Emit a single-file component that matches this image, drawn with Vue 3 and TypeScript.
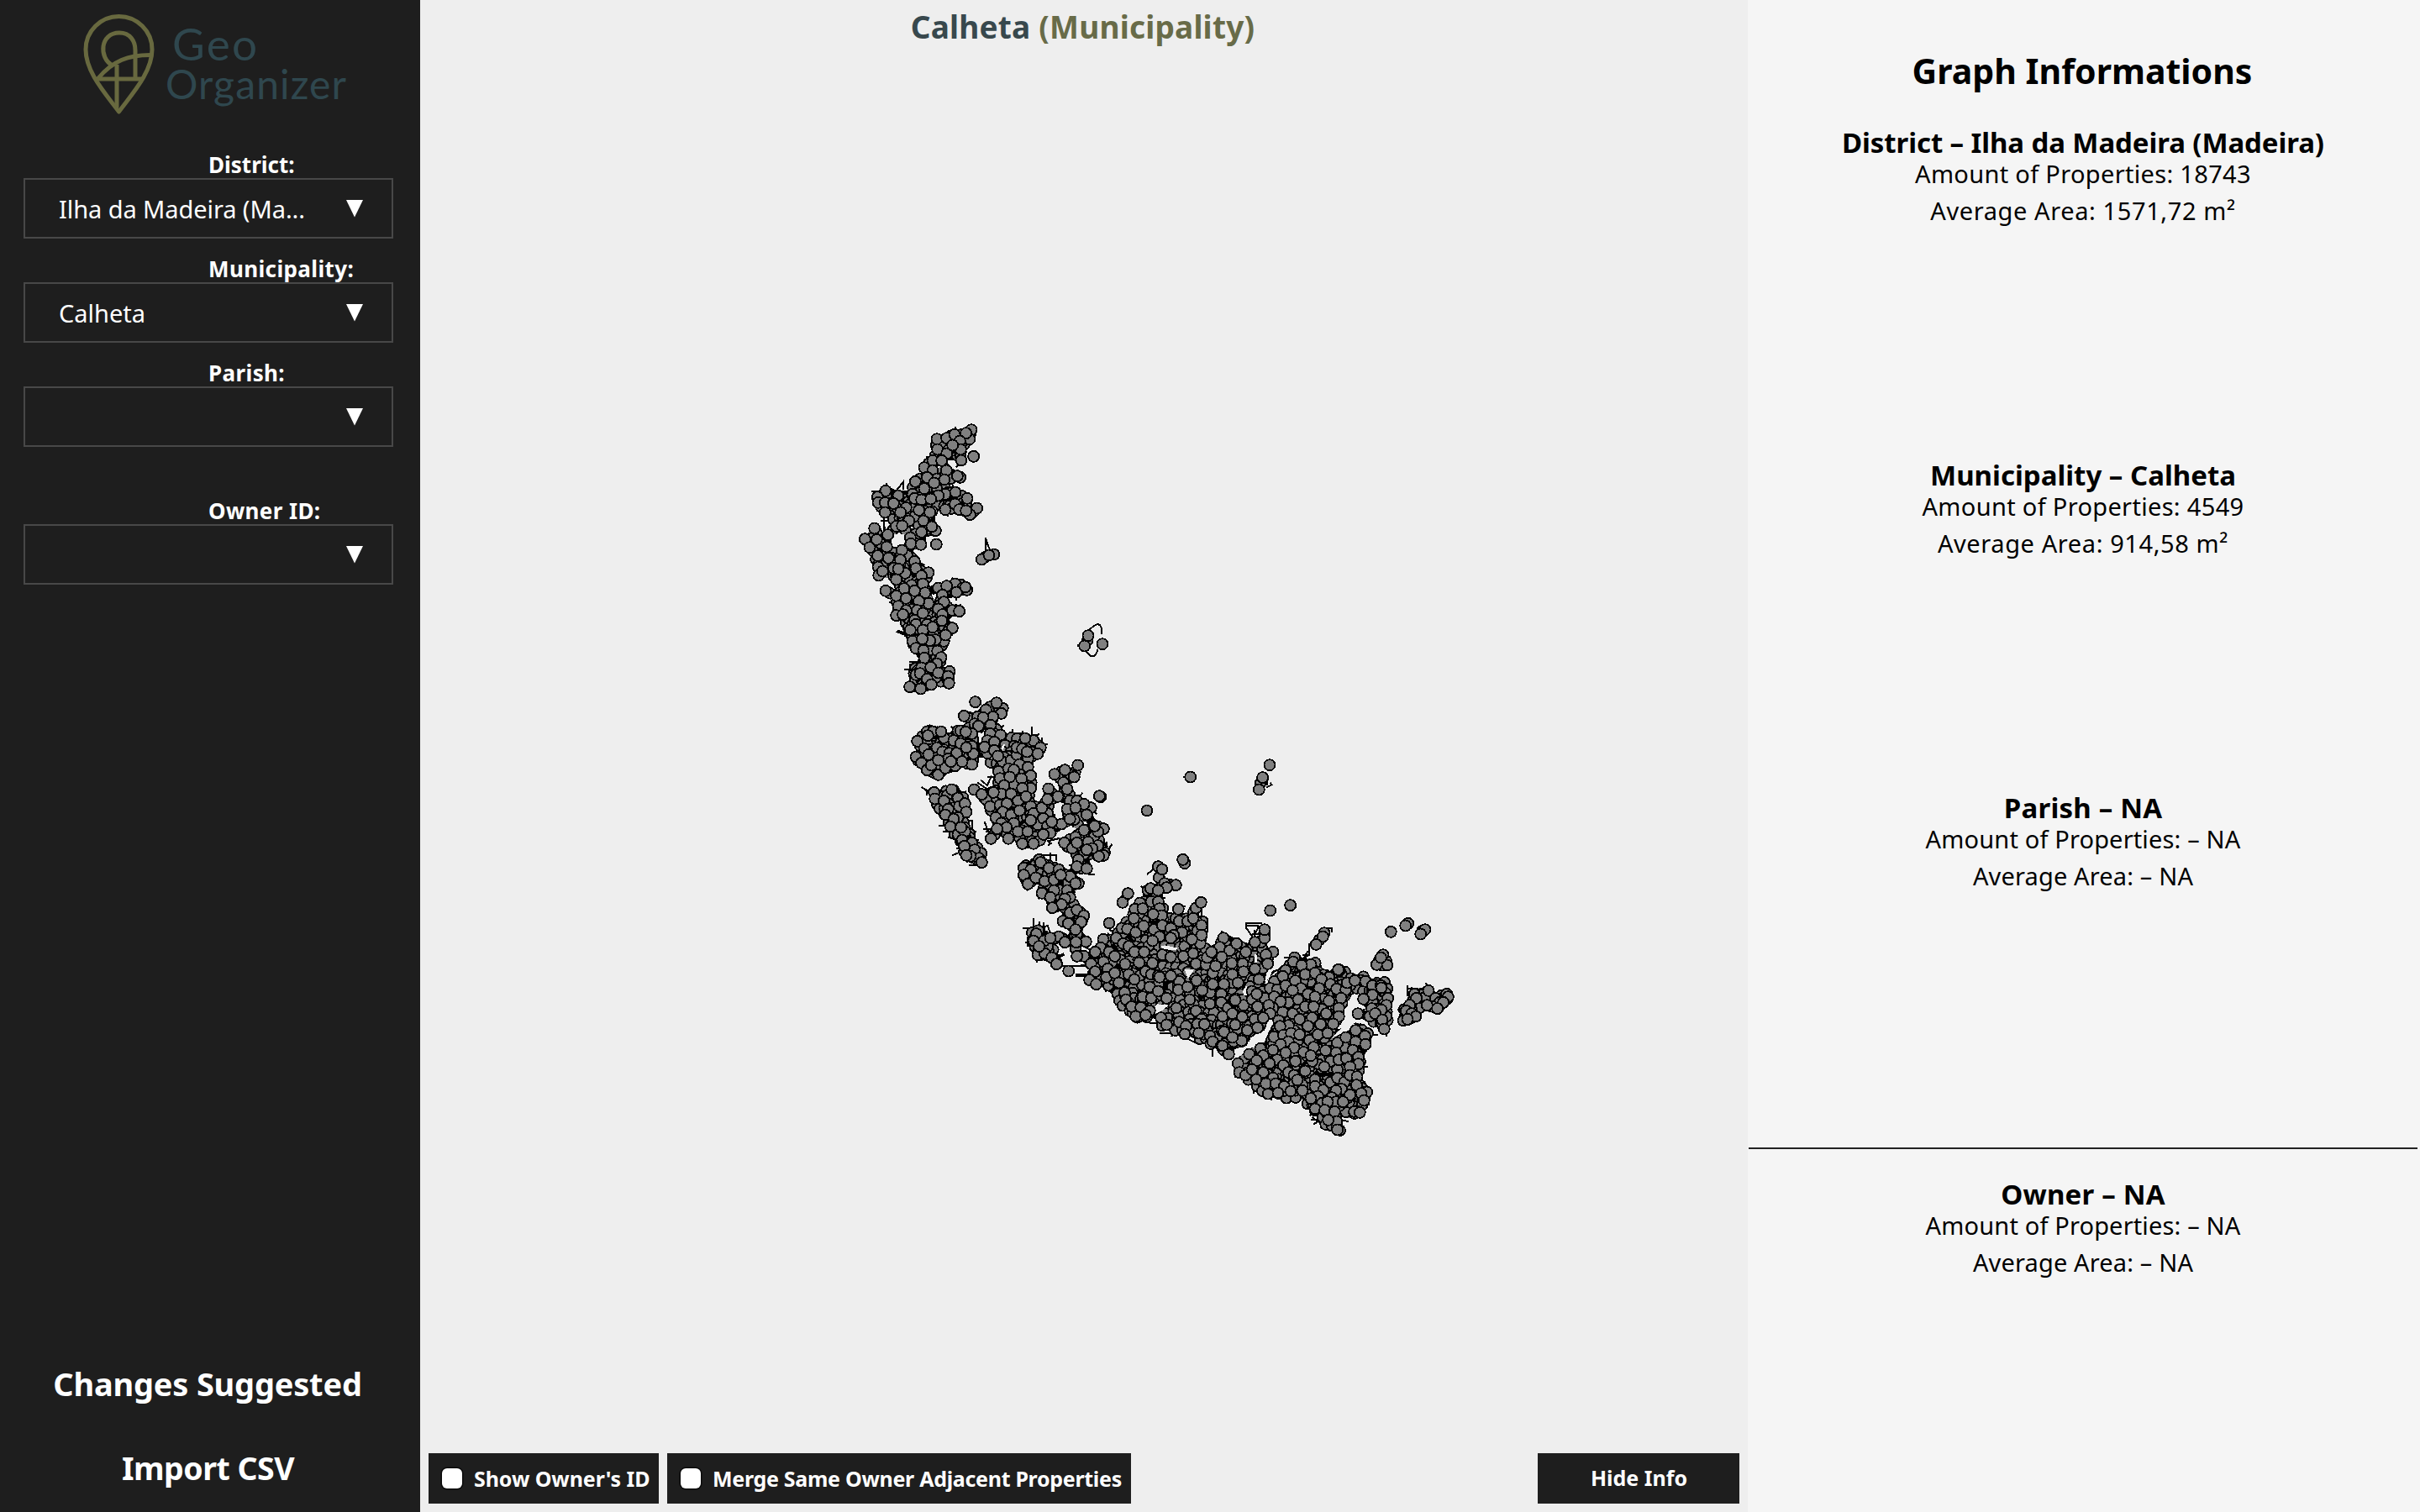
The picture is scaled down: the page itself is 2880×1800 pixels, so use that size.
<script setup lang="ts">
interface Field { label: string; value: string; key: string; apart?: boolean }
interface Block { title: string; amount: string; area: string; squared: boolean; owner?: boolean }
interface Cluster { x: number; y: number; nodes: string; spikes: string; mass: string; holes: string }
interface Pt { x: number; y: number }

const fields: Field[] = [
  { label: 'District:', value: 'Ilha da Madeira (Ma...', key: 'district' },
  { label: 'Municipality:', value: 'Calheta', key: 'municipality' },
  { label: 'Parish:', value: '', key: 'parish' },
  { label: 'Owner ID:', value: '', key: 'owner-id', apart: true },
]

const blocks: Block[] = [
  { title: 'District – Ilha da Madeira (Madeira)', amount: '18743', area: '1571,72 m', squared: true },
  { title: 'Municipality – Calheta', amount: '4549', area: '914,58 m', squared: true },
  { title: 'Parish – NA', amount: '– NA', area: '– NA', squared: false },
  { title: 'Owner – NA', amount: '– NA', area: '– NA', squared: false, owner: true },
]

// Node positions are in thirds of a pixel, relative to the cluster's origin.
const clusters: Cluster[] = [
  {
    x: 1000, y: 480,
    nodes: `345,128 380,125 408,112 468,95 462,128 449,107 427,135 347,165 430,165 380,180 401,150 476,190 330,205 362,205 432,204
    300,230 330,240 379,240 268,280 345,270 310,265 372,273 428,265 418,260 335,285 300,305 400,318 375,325 411,318 350,330 453,340
    258,325 162,313 133,335 207,330 135,355 160,355 190,358 265,340 290,345 323,342 235,373 281,382 488,375 410,360 375,380 463,398
    425,380 449,384 160,390 215,390 320,390 245,420 297,420 340,455 327,441 200,440 221,438 290,460 122,447 88,485 105,515 170,470
    130,487 166,513 250,480 252,502 288,505 343,504 240,545 220,525 134,545 172,553 215,560 265,565 135,585 137,615 151,600 190,590
    232,607 207,592 270,590 315,605 290,617 200,630 162,670 255,650 295,645 228,662 200,688 265,670 303,677 235,697 315,715 281,707
    350,660 410,645 437,660 452,667 415,675 380,653 447,657 365,685 370,710 207,725 200,758 235,740 224,755 275,740 295,750 350,735
    400,740 425,743 365,755 363,777 265,775 310,790 270,790 295,810 250,810 330,800 400,803 370,850 376,828 340,845 320,848 258,850
    293,842 270,875 297,883 347,885 360,908 300,910 345,930 390,958 290,945 323,943 270,970 285,965 310,985 350,963 385,975 248,1013
    287,1020 325,1005 388,1000 505,558 549,540 531,543 885,830 872,867 936,860`,
    spikes: `M110 315h30v60M165 285v30M200 312l24-30v28M490 370l18 5M70 483l20-6M155 400v60M145 420h35v30M285 570l14 8-6 12M175 710h35M200 815l60 25M205 812l25 8v15M240 850h20M228 950h40M245 925h60l-30 25M248 930v60M265 940h50v30M290 930v50M518 480v55M520 485l8 25 8 15M888 810c15-12 22-22 34-20c12 4 12 22 10 36M880 888c10 16 22 22 32 10l8-18M846 866l14-8M385 385v20M415 670v35`,
    mass: 'M350 130L460 105L430 190L350 200ZM130 335L250 340L330 350L340 440L220 440L150 390ZM250 340L300 300L330 340ZM330 330L400 325L450 370L340 370ZM100 480L150 465L160 520L230 530L300 600L280 640L190 620L130 600ZM200 690L250 640L320 680L350 740L360 830L340 900L290 890L250 840L230 780ZM255 930L330 925L390 960L380 1000L260 1000Z',
    holes: 'M188 468H227V506H188ZM335 228L360 222L350 236ZM338 308L355 322L345 334ZM325 680L340 690L335 706ZM145 640H185V650H145Z',
  },
  {
    x: 1060, y: 810,
    nodes: `340,105 302,77 400,100 378,80 395,118 262,127 310,130 365,130 330,133 300,155 357,160 313,163 240,180 250,180 290,190 268,184
    130,183 95,217 150,183 133,197 190,205 180,183 225,215 250,225 165,240 120,243 90,273 185,255 135,265 210,260 235,260 205,280
    110,295 130,320 145,303 170,337 230,305 195,313 290,300 255,290 290,235 295,262 270,240 215,290 170,285 355,190 345,215 392,195
    370,220 345,260 335,238 370,250 400,290 383,270 430,285 385,325 420,315 450,265 510,215 480,207 535,240 450,240 470,245 525,262
    490,280 487,255 460,300 490,310 440,320 500,340 440,370 390,350 425,345 467,351 405,375 500,385 470,385 298,390 340,425 325,407
    395,405 367,400 355,450 390,445 430,405 455,430 483,415 415,440 400,470 375,490 395,510 430,480 460,465 440,510 420,565 414,525
    380,530 358,565 455,540 489,540 470,583 510,583 500,450 510,475 560,475 540,455 525,515 545,493 560,520 570,545 545,550 500,500
    668,303 585,335 622,320 655,345 617,365 563,387 630,388 560,425 597,415 640,430 750,416 745,413 665,430 630,460 715,455 690,442
    660,455 700,480 655,497 610,513 640,495 575,505 690,535 760,530 740,540 728,520 660,560 620,580 648,600 665,580 740,590 705,577
    760,625 743,628 690,620 670,640 665,665 700,672 720,600 700,605 155,400 218,390 158,423 240,420 190,430 225,455 205,460 245,450
    265,440 270,470 240,490 195,480 225,495 213,522 240,550 265,540 251,525 255,570 290,580 263,592 300,605 315,635 285,628 325,650
    270,625 475,670 530,640 535,650 500,677 565,670 600,675 475,695 490,727 518,705 550,717 583,712 640,700 607,695 670,725 660,725
    540,760 583,750 570,775 630,750 640,775 622,780 610,800 577,812 640,830 665,820 690,840 615,860 634,868 680,863 665,905 660,890
    600,915 622,935 697,933 662,935 690,985 665,985 520,905 510,930 560,950 548,930 525,980 550,975 530,950 570,920 575,990 592,1013 635,1038`,
    spikes: `M110 380l20 15v15M125 390l30 10M245 405l25-8M150 440h20v30M175 485h30M170 520h30M185 540h30M205 560h40M235 600h35M220 625l35-15M255 640l40 10M260 430h20v60h-20M270 500h20v50M285 540h22M310 590l20 10v30M280 660h40M335 505l15 40 20-20M330 530h40v40M435 175v30h20M455 190h30v20M470 180l10 30M505 165v30h20M530 190l-20 20M540 205v40M385 180l20-20M320 355l25 20 15-35M345 345h25v40M310 365l30 20M560 590l12-8-10-8 40-10M570 615v30M540 625h50v20M660 430l25-28M770 575v40l20-30M760 575l15 20M760 410l12 2M690 690l38 4M510 850v40h20v-30M470 885h40M500 910l60-35 10 30M480 935h50M490 915v35M545 865l5 30M495 945l30 20M560 980h60l-30 15M600 985l18-10M540 990l60 30M600 1020l60 0 60-5M660 1050h50M660 1057h50M690 950l35 20M505 490h50M380 500v50M340 540h60M680 715l12 5`,
    mass: 'M145 400L235 385L270 430L278 500L292 560L325 610L335 655L280 640L240 590L205 540L180 480ZM380 200L520 205L540 250L470 320L505 400L500 460L570 450L580 540L510 590L400 560L370 500L350 440L300 400L380 370L390 330L340 280ZM690 560L760 580L775 635L700 620ZM495 890L560 895L582 940L580 990L610 1015L585 1020L520 985L505 940ZM480 660L600 660L620 760L580 780ZM650 430L715 440L700 490L640 480ZM100 200L290 200L280 300L120 300Z',
    holes: 'M590 470L605 458L618 465L600 500L588 495ZM315 200L335 178L342 190L325 215ZM395 235L410 225L400 255ZM590 545L640 520L665 530L620 552Z',
  },
  {
    x: 1260, y: 860,
    nodes: `470,195 315,315 753,152 728,197 715,240 450,503 443,490 355,515 369,525 378,575 418,581 385,590 318,600 328,593 355,600
    228,643 247,611 290,645 272,667 300,665 330,640 355,640 360,665 368,690 337,685 418,700 427,667 490,663 508,643 180,717
    268,700 225,735 245,738 275,750 303,727 340,740 370,725 360,765 335,780 430,710 400,735 460,710 440,750 410,760 400,770
    480,700 495,745 510,725 505,790 510,760 475,775 205,770 159,775 150,805 230,790 250,800 180,820 130,820 160,855 115,862
    200,835 130,890 110,920 134,935 175,880 170,910 200,895 215,930 270,820 305,820 237,863 287,858 335,860 370,830 400,838
    445,835 480,825 490,862 250,900 270,918 310,890 330,900 325,945 355,905 360,910 430,925 400,905 427,955 235,965 240,990
    260,1015 300,980 330,985 293,1018 355,960 385,985 325,1030 275,1050 310,1045 365,1055 430,1070 385,1080 420,1020 455,1085
    460,945 468,990 492,922 540,965 512,957 525,865 530,840 550,895 550,935 590,935 580,970 580,1000 540,1005 490,1030 510,1060
    495,1077 520,1078 500,1110 450,1113 540,1120 550,1140 583,1102 580,1155 605,1183 625,1140 655,1138 600,1060 620,1075 640,1095
    672,1100 660,1010 655,1050 605,1020 625,995 588,770 575,803 545,820 610,815 635,790 582,838 722,785 700,785 668,820 618,860
    657,862 700,880 620,900 660,890 715,918 765,820 740,830 746,862 735,770 735,740 690,960 713,975 735,985 708,1015 720,1050
    700,1090 690,1050 560,870 640,930 690,990 755,672 827,653`,
    spikes: `M315 543l30-25 5 15M445 195h10M755 215l5 8-20 10M745 210v15M370 550l10 20M385 560l20 0M300 628h80M385 650v70M670 717h55M670 725h45M670 715v20l25 35 20-45M700 740v20M690 755h20M180 740l30 15M60 900h60M60 907h60M65 870l35 0M165 960l30-10M190 975h40M210 1020h50M260 1065h50M325 1075h40M360 1110h60l-20 12M440 1120l60 30M550 1160v35M540 1150h40M470 665h40v35M530 700v50M745 920l20-30 30-10M895 790v40l-20 10M725 1100l25-10M690 1150l8 25`,
    mass: 'M105 860L170 795L230 725L300 640L370 640L390 715L515 700L520 790L490 880L545 825L590 780L700 790L760 810L745 880L735 930L765 1010L725 1085L655 1145L605 1185L540 1150L450 1115L370 1085L345 1055L300 1060L260 1050L220 1010L190 970L130 930ZM355 520L375 525L385 580L370 610L350 600Z',
    holes: 'M450 882L486 880L462 915L455 900ZM365 800L380 796L425 806L420 814L372 810ZM656 960L668 942L690 955L684 975L662 976ZM335 1020L352 1006L392 1010L372 1028L342 1042ZM698 830L706 828L706 860L698 856ZM258 830L275 820L280 828L262 842ZM742 905L765 880L748 925Z',
  },
  {
    x: 1450, y: 1040,
    nodes: `15,615 37,645 378,212 373,225 349,253 616,208 677,178 668,186 738,200 722,216 588,290 565,325 603,327 580,300 272,300 267,315
    330,325 297,328 240,345 200,385 230,367 310,360 275,383 345,355 395,370 368,378 433,345 428,343 400,395 422,412 185,410 210,415
    240,400 295,410 265,417 320,430 360,410 200,440 250,460 222,457 285,450 345,440 395,455 455,415 438,445 460,390 487,382 525,385
    550,400 580,400 582,408 550,433 518,448 605,445 310,475 370,485 340,475 230,495 265,500 215,525 290,520 250,542 335,515 320,545
    385,500 365,538 430,480 430,510 410,537 220,545 198,583 232,577 260,570 290,575 325,595 355,575 390,570 250,600 222,610 270,622
    305,638 340,620 383,632 450,620 425,605 455,585 490,560 490,600 523,580 525,610 420,640 480,630 600,470 548,482 498,500 600,510
    582,487 540,510 560,500 585,522 592,555 240,640 195,630 150,625 110,645 70,678 160,650 137,668 210,665 183,678 275,670 232,685
    250,710 270,720 335,670 310,705 330,650 400,670 378,690 425,700 430,665 500,655 500,680 457,660 470,690 75,710 97,720 120,700
    160,710 135,735 195,730 170,750 205,750 235,760 213,783 258,777 300,755 282,737 345,735 345,760 375,773 400,745 425,730 450,745
    470,720 495,725 493,755 440,770 530,780 470,790 510,785 420,775 405,800 355,795 330,803 370,820 420,815 390,815 345,840 445,815
    520,810 485,850 505,853 380,845 415,850 422,885 392,880 425,915 300,775 700,430 740,440 707,445 750,418 775,445 790,460 815,430
    820,440 803,460 765,475 745,470 782,482 683,470 670,490 690,500 705,510 660,525 675,520 195,480 180,470 185,500
    15,510 50,500 85,512 140,475 137,430 60,452 20,565 60,540 103,560 130,520 160,515 83,597 50,585 140,550`,
    spikes: `M370 195h35v15M235 300h25M320 275l-12 22M300 292h25M345 300v30h20v40M470 365l40 10M675 398v40M675 410h40M690 405v30M700 415h30M180 370l20-20M90 740l50 20M125 765v20M140 770l30 20M155 790h35v20M210 805h50v12M300 830h40M305 820v20M330 880h50M335 870l40 30 60-20 30 5M340 895l40-25M365 910l20-30 40 15M400 900l30 15M515 690h18M540 575h30M400 590l40-15M350 605h40M60 700v30M115 605v30M550 785h-20M520 820h15`,
    mass: 'M180 430L200 375L255 310L350 315L375 350L450 350L540 372L600 390L615 445L530 455L485 420L450 465L445 520L405 575L465 570L495 545L540 575L530 620L512 640L512 740L540 785L500 860L440 850L435 925L375 895L335 845L300 805L190 800L120 750L60 710L58 670L150 635L180 565L210 510L180 500ZM540 480L600 480L612 520L590 560L545 525ZM655 500L680 440L730 430L715 510L660 540ZM745 465L800 430L825 440L790 490Z',
    holes: 'M128 295L138 290L138 318L128 322ZM200 508L204 528L180 556L155 572L178 540ZM60 640L100 605L158 580L156 628L120 620L80 650L60 655ZM480 438L500 430L500 470L475 490L475 530L500 545L440 570L405 588L450 540L455 490ZM385 488L400 475L398 495Z',
  },
]

const parse = (s: string): Pt[] =>
  s.trim().split(/\s+/).map((p) => {
    const [x, y] = p.split(',').map(Number)
    return { x, y }
  })

const distance = (a: Pt, b: Pt): number => Math.hypot(a.x - b.x, a.y - b.y)

const polygons = (path: string): Pt[][] =>
  path.split('Z').filter(Boolean).map((part) => parse(part.slice(1).replace(/ /g, ',').replace(/L/g, ' ')))

const inside = (p: Pt, poly: Pt[]): boolean => {
  let hit = false
  for (let i = 0, j = poly.length - 1; i < poly.length; j = i++) {
    const a = poly[i]
    const b = poly[j]
    if (a.y > p.y !== b.y > p.y && p.x < ((b.x - a.x) * (p.y - a.y)) / (b.y - a.y) + a.x) hit = !hit
  }
  return hit
}

// A densely packed area is filled with a jittered, staggered lattice of nodes.
const lattice = (path: string): Pt[] => {
  const polys = polygons(path)
  const points: Pt[] = []
  for (let row = 0; row < 56; row++) {
    for (let col = 0; col < 40; col++) {
      const seed = (row * 73 + col * 151 + row * col * 13) % 97
      const p = { x: col * 26 + (row % 2) * 13 + (seed % 17) - 8, y: row * 23 + (seed % 13) - 6 }
      if (seed % 7 && polys.some((poly) => inside(p, poly))) points.push(p)
    }
  }
  return points
}

// Neighbouring nodes are joined by an edge, and partly hidden nodes sit under close pairs.
// Crowded nodes also have a loose edge that may stick out past the rim.
const graph = clusters.map((c) => {
  const nodes = parse(c.nodes)
  const crowd = nodes.map((a) => nodes.filter((b) => distance(a, b) < 70).length)
  const under: Pt[] = lattice(c.mass)
  let edges = ''
  let loose = ''
  nodes.forEach((a, i) => {
    if (crowd[i] > 5 && i % 2 === 0) {
      const angle = i * 2.4
      const length = 25 + ((i * 5) % 8)
      loose += `M${a.x} ${a.y}l${Math.round(Math.cos(angle) * length)} ${Math.round(Math.sin(angle) * length)}`
    }
    for (let j = i + 1; j < nodes.length; j++) {
      const b = nodes[j]
      const d = distance(a, b)
      const reach = crowd[i] > 5 && crowd[j] > 5 ? 53 : 46
      if (d < reach) {
        edges += `M${a.x} ${a.y}L${b.x} ${b.y}`
        if (d > 16 && (i + j) % 5 > 1) {
          under.push({ x: (a.x + b.x) / 2 + ((i * 7) % 9) - 4, y: (a.y + b.y) / 2 + ((j * 5) % 9) - 4 })
        }
      }
    }
  })
  return { ...c, nodes, under, edges, loose, move: `translate(${c.x} ${c.y}) scale(0.33333)` }
})
</script>

<template>
  <div class="app">
    <aside class="sidebar">
      <div class="brand">
        <svg width="420" height="140" viewBox="0 0 420 140">
          <g fill="none" stroke="#68693f" stroke-width="5" stroke-linejoin="round">
            <path d="M141.500 133C126 112 102 86 102 59a39.500 39.500 0 0 1 79 0C181 86 157 112 141.500 133Z" />
            <path d="M134 78C117 69 119 39 142 39C155 39 161 49 161 60V93" />
            <path d="M117 93C134 73 152 65 181 65.500M115 94H170M139 77V128" />
          </g>
          <g class="brand-text">
            <text x="205" y="72" font-size="53" textLength="101">Geo</text>
            <text x="197" y="118" font-size="48" textLength="215">Organizer</text>
          </g>
        </svg>
      </div>
      <div v-for="f in fields" :key="f.key" class="field" :class="[f.key, { apart: f.apart }]">
        <div class="label">{{ f.label }}</div>
        <div class="select">
          <span>{{ f.value }}</span>
          <svg width="20" height="21" viewBox="0 0 20 21"><path d="M0 0H20L10 20.500Z" fill="#fff" /></svg>
        </div>
      </div>
      <div class="actions">
        <div class="action changes">Changes Suggested</div>
        <div class="action import">Import CSV</div>
      </div>
    </aside>

    <main class="canvas">
      <h1 class="title">Calheta <span>(Municipality)</span></h1>
      <svg class="graph" width="1580" height="1667" viewBox="500 63 1580 1667" shape-rendering="crispEdges">
        <g v-for="(c, k) in graph" :key="'base' + k" :transform="c.move">
          <path :d="c.edges" class="edge" />
          <path :d="c.mass" />
          <path :d="c.spikes" class="spike" />
          <path :d="c.loose" class="spike" />
        </g>
        <g v-for="(c, k) in graph" :key="'under' + k" :transform="c.move">
          <circle v-for="(n, i) in c.under" :key="i" :cx="n.x" :cy="n.y" r="19" class="node" />
        </g>
        <g v-for="(c, k) in graph" :key="'hole' + k" :transform="c.move">
          <path :d="c.holes" class="hole" />
        </g>
        <g v-for="(c, k) in graph" :key="'top' + k" :transform="c.move">
          <circle v-for="(n, i) in c.nodes" :key="i" :cx="n.x" :cy="n.y" r="19.500" class="node" />
        </g>
      </svg>
      <div class="toolbar">
        <label class="tool check show"><i></i><span>Show Owner's ID</span></label>
        <label class="tool check merge"><i></i><span>Merge Same Owner Adjacent Properties</span></label>
        <button class="tool hide">Hide Info</button>
      </div>
    </main>

    <section class="info">
      <h2>Graph Informations</h2>
      <div v-for="b in blocks" :key="b.title" class="block" :class="{ owner: b.owner, filled: b.squared }">
        <h3>{{ b.title }}</h3>
        <p>Amount of Properties: {{ b.amount }}</p>
        <p class="area">Average Area: {{ b.area }}<template v-if="b.squared">²</template></p>
      </div>
    </section>
  </div>
</template>

<style>
body { margin: 0; background: #eee; }
</style>

<style scoped>
.app {
  display: flex;
  width: 2880px;
  height: 1800px;
  overflow: hidden;
  font-family: "Noto Sans", "Open Sans", sans-serif;
  color: #000;
}
.sidebar {
  display: flex;
  flex-direction: column;
  width: 500px;
  height: 1800px;
  flex: none;
  background: #1e1e1e;
  color: #fff;
}
.brand { height: 180px; }
.brand svg { display: block; }
.brand-text { font-family: Lato, sans-serif; fill: #2f474e; }
.field { margin: 0 32px 20px 28px; }
.apart { margin-top: 40px; }
.label {
  height: 32px;
  padding-left: 220px;
  font-size: 26px;
  line-height: 32px;
  font-weight: 700;
  letter-spacing: 0.38px;
  white-space: nowrap;
}
.district .label { letter-spacing: 0; }
.district .select { letter-spacing: -0.08px; }
.select {
  box-sizing: border-box;
  display: flex;
  align-items: center;
  justify-content: space-between;
  height: 72px;
  padding: 0 34px 0 40px;
  border: 2px solid #484848;
  font-size: 29px;
  white-space: nowrap;
}
.select span { padding-top: 2px; line-height: 66px; }
.actions { margin-top: auto; padding: 0 6px 3px 0; text-align: center; }
.action { height: 100px; line-height: 100px; font-size: 38px; font-weight: 700; letter-spacing: -0.2px; }
.import { padding: 1px 0 0 1px; height: 99px; font-size: 37.500px; letter-spacing: -0.5px; }
.canvas { display: flex; flex-direction: column; width: 1580px; height: 1800px; flex: none; background: #eee; }
.title {
  margin: 0;
  padding-right: 3px;
  height: 63px;
  line-height: 63px;
  font-size: 37px;
  font-weight: 700;
  letter-spacing: 0.2px;
  text-align: center;
  color: #38484d;
}
.title span { color: #686b48; }
.graph { display: block; }
.edge { fill: none; stroke: #000; stroke-width: 32; }
.spike { fill: none; stroke: #000; stroke-width: 6; }
.hole { fill: #eee; }
.node { fill: #808080; stroke: #000; stroke-width: 5.500; }
.toolbar { display: flex; gap: 10px; height: 60px; padding: 0 10px; }
.tool {
  box-sizing: border-box;
  flex: none;
  height: 60px;
  border: 0;
  background: #1e1e1e;
  color: #fff;
  font: 700 25px/60px "Noto Sans", "Open Sans", sans-serif;
  white-space: nowrap;
}
.check { display: flex; align-items: center; padding-left: 16px; }
.check i {
  width: 24px;
  height: 24px;
  border-radius: 6px;
  background: #fff;
  box-shadow: 0 0 0 1.500px #0a0a0a;
}
.check span { margin-left: 14px; }
.show { width: 274px; letter-spacing: -0.08px; }
.merge { width: 552px; letter-spacing: -0.3px; }
.hide { width: 240px; margin-left: auto; padding: 0 0 2px 1px; line-height: 58px; text-align: center; }
.info {
  box-sizing: border-box;
  width: 800px;
  height: 1800px;
  padding: 0 3px 0 1px;
  background: #f5f5f5;
  text-align: center;
}
h2 { margin: 0 2px 0 0; padding: 24px 0 8px; font-size: 41px; line-height: 120px; font-weight: 700; }
.block { height: 396px; }
h3 { margin: 0 0 -1px; padding-top: 1px; font-size: 33px; line-height: 33px; font-weight: 700; }
.block:nth-child(2) h3 { letter-spacing: -0.1px; }
.block:nth-child(n + 4) h3 { letter-spacing: 0.2px; }
p { margin: 0; font-size: 29px; line-height: 44px; letter-spacing: 0.15px; }
.filled p { letter-spacing: 0.32px; }
.filled .area { letter-spacing: 0.6px; }
.owner { margin-top: 26px; padding-top: 36px; border-top: 2px solid #222; }
</style>
